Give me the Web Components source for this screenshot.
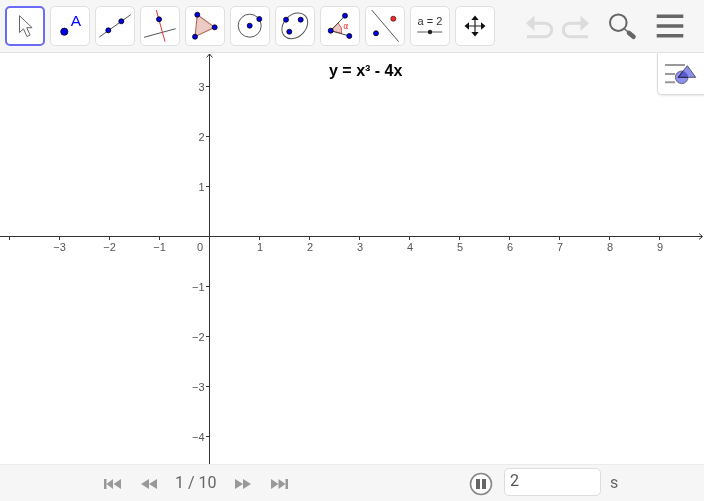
<!DOCTYPE html>
<html>
<head>
<meta charset="utf-8">
<title>y = x³ - 4x</title>
<style>
  html, body { margin: 0; padding: 0; background: #fff; overflow: hidden; }
</style>
</head>
<body>
<ggb-app>
  <ggb-toolbar slot="toolbar">
    <ggb-tool selected><svg viewBox="0 0 40 40"><path d="M14.5 9.7V26.5l4-3.6 3.4 7.6 3.2-1.4-3.4-7.4h5.4z" fill="#fff" stroke="#666" stroke-width="1" stroke-linejoin="round"/></svg></ggb-tool>
    <ggb-tool><svg viewBox="0 0 40 40"><circle cx="14.3" cy="25.7" r="3.6" fill="#00e" stroke="#000" stroke-width=".8"/><text x="26" y="19.8" font-size="15.5" fill="#00f" text-anchor="middle" font-family="Liberation Sans">A</text></svg></ggb-tool>
    <ggb-tool><svg viewBox="0 0 40 40"><path d="M4.3 31 35.7 8.7" stroke="#555"/><circle cx="13.3" cy="24.3" r="2.5" fill="#00e" stroke="#000" stroke-width=".8"/><circle cx="26.3" cy="15.3" r="2.5" fill="#00e" stroke="#000" stroke-width=".8"/></svg></ggb-tool>
    <ggb-tool><svg viewBox="0 0 40 40"><path d="M4 31.3 35.7 22.7" stroke="#555"/><path d="M16.3 4 25 35.7" stroke="#e33"/><circle cx="19" cy="13.3" r="2.5" fill="#00e" stroke="#000" stroke-width=".8"/></svg></ggb-tool>
    <ggb-tool><svg viewBox="0 0 40 40"><path d="M12.3 8.7 29.7 21.3 10 30.7z" fill="#ebcbc4" stroke="#b5695c" stroke-width="1.1"/><circle cx="12.3" cy="8.7" r="2.5" fill="#00e" stroke="#000" stroke-width=".8"/><circle cx="29.7" cy="21.3" r="2.5" fill="#00e" stroke="#000" stroke-width=".8"/><circle cx="10" cy="30.7" r="2.5" fill="#00e" stroke="#000" stroke-width=".8"/></svg></ggb-tool>
    <ggb-tool><svg viewBox="0 0 40 40"><circle cx="19.7" cy="19.7" r="11.5" fill="none" stroke="#555"/><circle cx="19.7" cy="19.7" r="2.5" fill="#00e" stroke="#000" stroke-width=".8"/><circle cx="29.3" cy="13" r="2.5" fill="#00e" stroke="#000" stroke-width=".8"/></svg></ggb-tool>
    <ggb-tool><svg viewBox="0 0 40 40"><ellipse cx="19.8" cy="19.8" rx="14.5" ry="11" transform="rotate(-45 19.8 19.8)" fill="none" stroke="#555"/><circle cx="11" cy="13.7" r="2.5" fill="#00e" stroke="#000" stroke-width=".8"/><circle cx="25.7" cy="13.7" r="2.5" fill="#00e" stroke="#000" stroke-width=".8"/><circle cx="14.3" cy="25.7" r="2.5" fill="#00e" stroke="#000" stroke-width=".8"/></svg></ggb-tool>
    <ggb-tool><svg viewBox="0 0 40 40"><path d="M10.7 24.7 18 17a11 11 0 0 1 3.5 10.3z" fill="#ebcbc4" stroke="#d55" stroke-width="1"/><path d="M10.7 24.7 25 9.7M10.7 24.7 29.3 30" stroke="#444"/><circle cx="25" cy="9.7" r="2.5" fill="#00e" stroke="#000" stroke-width=".8"/><circle cx="10.7" cy="24.7" r="2.5" fill="#00e" stroke="#000" stroke-width=".8"/><circle cx="29.3" cy="30" r="2.5" fill="#00e" stroke="#000" stroke-width=".8"/><text x="26" y="22.5" font-size="8" fill="#e22" text-anchor="middle" font-family="DejaVu Sans">α</text></svg></ggb-tool>
    <ggb-tool><svg viewBox="0 0 40 40"><path d="M6.7 4 33.7 35.7" stroke="#555"/><circle cx="11" cy="27.3" r="2.5" fill="#00e" stroke="#000" stroke-width=".8"/><circle cx="28.3" cy="12.7" r="2.5" fill="#f22" stroke="#422" stroke-width=".8"/></svg></ggb-tool>
    <ggb-tool><svg viewBox="0 0 40 40"><text x="20" y="19" font-size="11" fill="#333" text-anchor="middle" font-family="Liberation Sans">a = 2</text><path d="M7.3 26H32.3" stroke="#777" stroke-width="1.2"/><circle cx="20" cy="26" r="2.2" fill="#222"/></svg></ggb-tool>
    <ggb-tool><svg viewBox="0 0 40 40"><path d="M20 11V29M11 20H29" stroke="#222" stroke-width="1.2"/><path d="M20 9.5 23.7 14H16.3zM20 30.5 23.7 26H16.3zM9.5 20 14 16.3V23.7zM30.5 20 26 16.3V23.7z" fill="#111"/></svg></ggb-tool>
    <ggb-actions slot="actions"></ggb-actions>
  </ggb-toolbar>
  <ggb-graph slot="graph"></ggb-graph>
  <ggb-player slot="player" page="1 / 10" delay="2" unit="s"></ggb-player>
</ggb-app>

<script>
class GgbApp extends HTMLElement {
  constructor() {
    super();
    this.attachShadow({ mode: 'open' });
    this.shadowRoot.innerHTML = `
      <style>
        :host { display: flex; flex-direction: column; width: 704px; height: 501px; background: #fff; font-family: "Liberation Sans", sans-serif; }
        ::slotted([slot=graph]) { flex: 1; min-height: 0; }
      </style>
      <slot name="toolbar"></slot>
      <slot name="graph"></slot>
      <slot name="player"></slot>
    `;
  }
}

class GgbToolbar extends HTMLElement {
  constructor() {
    super();
    this.attachShadow({ mode: 'open' });
    this.shadowRoot.innerHTML = `
      <style>
        :host { display: flex; box-sizing: border-box; height: 53px; padding: 6px 0 0 5px; gap: 5px; background: #f6f6f6; border-bottom: 1px solid #e2e2e2; }
      </style>
      <slot></slot>
      <slot name="actions"></slot>
    `;
  }
}

class GgbTool extends HTMLElement {
  constructor() {
    super();
    this.attachShadow({ mode: 'open' });
    this.shadowRoot.innerHTML = `
      <style>
        :host { display: block; box-sizing: border-box; width: 40px; height: 40px; background: #fff; border: 1px solid #e0e0e0; border-radius: 5px; position: relative; }
        :host([selected]) { border: 2px solid #6b6bf5; border-radius: 5px; }
        ::slotted(svg) { position: absolute; left: -1px; top: -1px; width: 40px; height: 40px; will-change: transform; }
        :host([selected]) ::slotted(svg) { left: -2px; top: -2px; }
      </style>
      <slot></slot>
    `;
  }
}

class GgbActions extends HTMLElement {
  constructor() {
    super();
    this.attachShadow({ mode: 'open' });
    this.shadowRoot.innerHTML = `
      <style>
        :host { display: flex; align-items: flex-start; margin-left: 25px; margin-top: 3px; }
        svg { display: block; }
      </style>
      <svg width="34" height="30" viewBox="0 0 34 30" fill="none" stroke="#dcdcdc" stroke-width="3">
        <path d="M8 14.3H20a6.7 6.7 0 0 1 0 13.4H2"/><path d="M1 14.3 9.5 6.7V22z" fill="#dcdcdc" stroke="none"/>
      </svg>
      <svg width="34" height="30" viewBox="0 0 34 30" fill="none" stroke="#dcdcdc" stroke-width="3" style="margin-left:3px">
        <path d="M20 14.3H8a6.7 6.7 0 0 0 0 13.4H26"/><path d="M27 14.3 18.5 6.7V22z" fill="#dcdcdc" stroke="none"/>
      </svg>
      <svg width="34" height="34" viewBox="0 0 34 34" fill="none" style="margin-left:11px;margin-top:-1px">
        <circle cx="11.3" cy="14.7" r="8.3" stroke="#666" stroke-width="2"/>
        <path d="M17.5 21 23 25.5" stroke="#666" stroke-width="1.6"/>
        <path d="M22 25 26.5 28.8" stroke="#666" stroke-width="4.6" stroke-linecap="round"/>
      </svg>
      <svg width="28" height="30" viewBox="0 0 28 30" style="margin-left:15px">
        <path d="M.7 7.3H27.3M.7 17H27.3M.7 26.7H27.3" stroke="#666" stroke-width="3.6"/>
      </svg>
    `;
  }
}

class GgbGraph extends HTMLElement {
  constructor() {
    super();
    this.attachShadow({ mode: 'open' });
  }

  connectedCallback() {
    this.render();
  }

  get styles() {
    return `
      <style>
        :host { display: block; position: relative; overflow: hidden; background: #fff; }
        svg { display: block; position: absolute; left: 0; top: 0; will-change: transform; }
        .label { font: 11px "Liberation Sans", sans-serif; fill: #555; }
        .title { position: absolute; left: 329px; top: 9px; font: bold 16px "Liberation Sans", sans-serif; color: #000; white-space: nowrap; will-change: transform; }
        .stylebar { position: absolute; right: 0; top: 0; box-sizing: border-box; width: 47px; height: 42px; background: #fff; border: 1px solid #ddd; border-width: 0 0 1px 1px; border-bottom-left-radius: 5px; box-shadow: 0 1px 2px rgba(0,0,0,.1); }
        .stylebar svg { left: 7px; top: 9px; }
      </style>
    `;
  }

  createAxes() {
    const ox = 209.5;
    const oy = 183.5;
    let ticks = '';
    let labels = '';
    for (let i = -4; i <= 9; i++) {
      if (i === 0) continue;
      const x = ox + i * 50;
      ticks += `M${x} ${oy}V${oy + 3.5}`;
      if (i === -4) continue;
      const text = i < 0 ? `\u2212${-i}` : `${i}`;
      labels += `<text class="label" x="${x + (i < 0 ? 0 : 0.5)}" y="${oy + 14}" text-anchor="middle">${text}</text>`;
    }
    for (let i = -4; i <= 3; i++) {
      if (i === 0) continue;
      const y = oy - i * 50;
      ticks += `M${ox - 3.5} ${y}H${ox}`;
      const text = i < 0 ? `\u2212${-i}` : `${i}`;
      labels += `<text class="label" x="${ox - 5}" y="${y + 4}" text-anchor="end">${text}</text>`;
    }
    labels += `<text class="label" x="200" y="${oy + 14}" text-anchor="middle">0</text>`;
    return `
      <svg width="704" height="411" viewBox="0 0 704 411" fill="none">
        <path d="M0 ${oy}H702M${ox} 1V411${ticks}" stroke="#333" stroke-width="1"/>
        <path d="M699 ${oy - 3}L702.5 ${oy}L699 ${oy + 3}M${ox - 3} 4.5L${ox} 1L${ox + 3} 4.5" stroke="#333" stroke-width="1"/>
        ${labels}
      </svg>
    `;
  }

  render() {
    this.shadowRoot.innerHTML = `
      ${this.styles}
      ${this.createAxes()}
      <div class="title">y = x³ - 4x</div>
      <div class="stylebar">
        <svg width="34" height="26" viewBox="0 0 34 26">
          <defs><clipPath id="round"><circle cx="16.7" cy="15.3" r="6.3"/></clipPath></defs>
          <path d="M0 3H20M0 12H10M0 20.3H10" stroke="#999" stroke-width="2"/>
          <circle cx="16.7" cy="15.3" r="6.3" fill="#8e8ef0" stroke="#667"/>
          <path d="M22.3 3.7 30.7 15.3H13.3z" fill="#8e8ef0" stroke="#556" stroke-width="1"/>
          <path d="M22.3 3.7 30.7 15.3H13.3z" fill="#5a5ad0" stroke="#223" stroke-width="1" clip-path="url(#round)"/>
        </svg>
      </div>
    `;
  }
}

class GgbPlayer extends HTMLElement {
  constructor() {
    super();
    this.attachShadow({ mode: 'open' });
  }

  connectedCallback() {
    const page = this.getAttribute('page');
    const delay = this.getAttribute('delay');
    const unit = this.getAttribute('unit');
    this.shadowRoot.innerHTML = `
      <style>
        :host { display: flex; align-items: center; box-sizing: border-box; height: 37px; padding: 0 0 2px 104px; background: #f6f6f6; border-top: 1px solid #ebebeb; font: 16px Roboto, sans-serif; color: #666; }
        svg { display: block; flex: none; margin-top: 3px; }
        .page { margin: 0 18.2px 0 18px; white-space: nowrap; will-change: transform; }
        .delay { box-sizing: border-box; width: 97.5px; height: 28px; margin: 0 9px 0 11px; padding: 1px 5px; background: #fff; border: 1px solid #ddd; border-radius: 5px; line-height: 22px; color: #555; }
        .delay span, .unit { will-change: transform; display: inline-block; }
      </style>
      <svg width="17" height="10" viewBox="0 0 17 10" fill="#999"><path d="M0 0H2.5V10H0zM9 0V10L2.5 5zM17 0V10L9.5 5z"/></svg>
      <svg width="16" height="10" viewBox="0 0 16 10" fill="#999" style="margin-left:20px"><path d="M8 0V10L0 5zM16 0V10L8 5z"/></svg>
      <span class="page">${page}</span>
      <svg width="16" height="10" viewBox="0 0 16 10" fill="#999"><path d="M0 0V10L8 5zM8 0V10L16 5z"/></svg>
      <svg width="17" height="10" viewBox="0 0 17 10" fill="#999" style="margin-left:20px"><path d="M0 0V10L7.5 5zM7.5 0V10L14.5 5zM14.5 0H17V10H14.5z"/></svg>
      <svg width="24" height="24" viewBox="0 0 24 24" style="margin-left:181px"><circle cx="12" cy="12" r="10.5" fill="#fff" stroke="#888" stroke-width="1.6"/><path d="M7 7H11V17H7zM13 7H17V17H13z" fill="#666"/></svg>
      <div class="delay"><span>${delay}</span></div>
      <span class="unit">${unit}</span>
    `;
  }
}

customElements.define('ggb-app', GgbApp);
customElements.define('ggb-toolbar', GgbToolbar);
customElements.define('ggb-tool', GgbTool);
customElements.define('ggb-actions', GgbActions);
customElements.define('ggb-graph', GgbGraph);
customElements.define('ggb-player', GgbPlayer);
</script>
</body>
</html>
